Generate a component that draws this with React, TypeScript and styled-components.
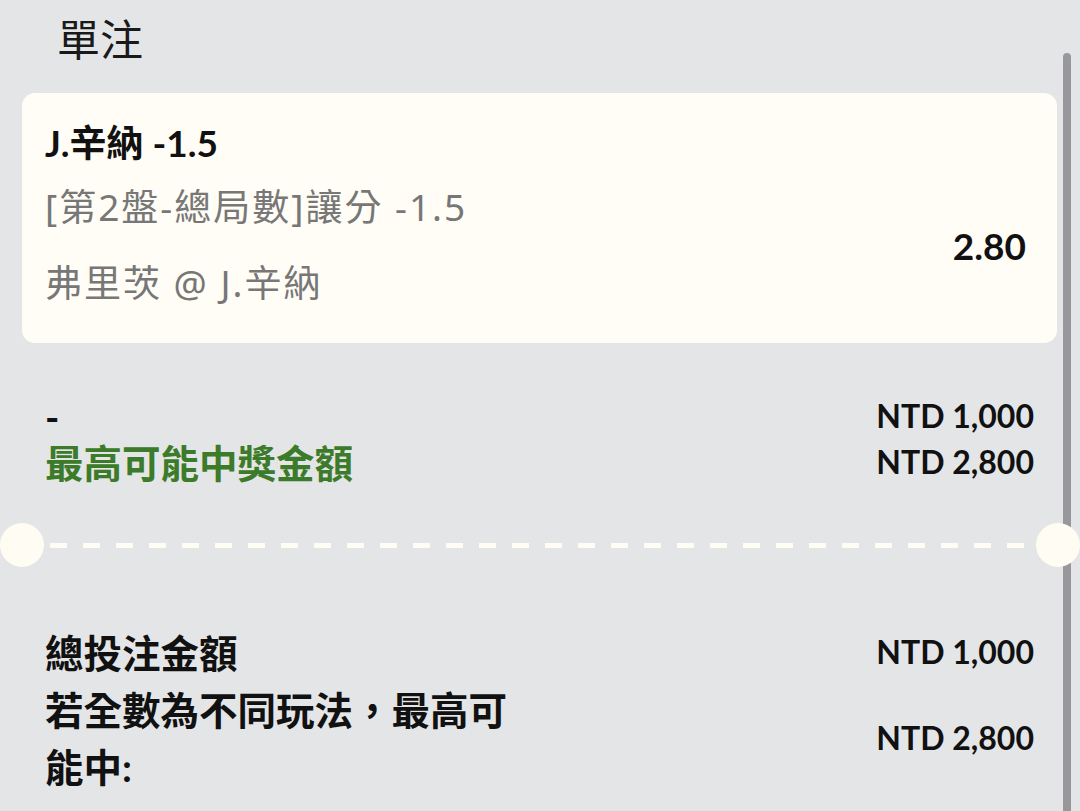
import React from "react";
import styled, { createGlobalStyle } from "styled-components";

const Global = createGlobalStyle`
  html, body {
    margin: 0;
    padding: 0;
    background: #e4e5e7;
    overflow: hidden;
  }
  * { box-sizing: border-box; }
`;

const FONT = `Lato, "Noto Sans CJK TC", "Noto Sans", sans-serif`;
const DETAIL_FONT = `"Noto Sans", "Noto Sans CJK TC", sans-serif`;

const Page = styled.div`
  position: relative;
  width: 1080px;
  height: 811px;
  overflow: hidden;
  background: #e4e5e7;
  font-family: ${FONT};
  color: #111;
`;

const Scrollbar = styled.div`
  position: absolute;
  left: 1063px;
  top: 53px;
  width: 8px;
  bottom: -10px;
  border-radius: 4px;
  background: #98989c;
  z-index: 0;
`;

const Title = styled.h1`
  margin: 0;
  padding-left: 57px;
  height: 80px;
  line-height: 80px;
  font-size: 43px;
  font-weight: 400;
  color: #1a1a1a;
`;

const Card = styled.section`
  position: relative;
  z-index: 1;
  margin: 13px 23px 0 22px;
  height: 250px;
  border-radius: 13px;
  background: #fffdf5;
  padding: 25px 31px 0 23px;
`;

const BetName = styled.div`
  font-size: 37px;
  font-weight: 700;
  line-height: 50px;
  color: #111;
`;

const CardBody = styled.div`
  display: flex;
  align-items: center;
  justify-content: space-between;
  margin-top: 1px;
`;

const Details = styled.div`
  display: flex;
  flex-direction: column;
`;

const Detail = styled.div`
  font-family: ${DETAIL_FONT};
  font-size: 37px;
  letter-spacing: 2px;
  font-weight: 400;
  line-height: 76px;
  color: #777777;
`;

const Odds = styled.div`
  font-size: 37px;
  font-weight: 700;
  color: #111;
`;

const Summary = styled.div<{ $top: number }>`
  position: relative;
  z-index: 1;
  display: grid;
  grid-template-columns: auto auto;
  justify-content: space-between;
  align-items: center;
  margin-top: ${(p) => p.$top}px;
  padding: 0 46px 0 45px;
`;

const Label = styled.div<{ $green?: boolean; $line: number }>`
  font-size: 38.5px;
  font-weight: 700;
  line-height: ${(p) => p.$line}px;
  color: ${(p) => (p.$green ? "#3b7b29" : "#111")};
  max-width: 480px;
`;

const Amount = styled.div`
  font-size: 32px;
  font-weight: 700;
  text-align: right;
  color: #111;
  white-space: nowrap;
  padding-bottom: 4px;
`;

const Divider = styled.div`
  position: relative;
  z-index: 2;
  display: flex;
  align-items: center;
  height: 44px;
  margin-top: 37px;
`;

const Notch = styled.div`
  width: 44px;
  height: 44px;
  flex: none;
  border-radius: 50%;
  background: #fffdf3;
`;

const Dashes = styled.div`
  flex: 1;
  height: 5px;
  margin: 0 6px;
  background: repeating-linear-gradient(
    to right,
    #fffdf3 0 17px,
    transparent 17px 33px
  );
`;

export default function App() {
  return (
    <Page>
      <Global />
      <Scrollbar />
      <Title>單注</Title>
      <Card>
        <BetName>J.辛納 -1.5</BetName>
        <CardBody>
          <Details>
            <Detail>[第2盤-總局數]讓分 -1.5</Detail>
            <Detail>弗里茨 @ J.辛納</Detail>
          </Details>
          <Odds>2.80</Odds>
        </CardBody>
      </Card>
      <Summary $top={51}>
        <Label $line={46}>-</Label>
        <Amount>NTD 1,000</Amount>
        <Label $line={46} $green>
          最高可能中獎金額
        </Label>
        <Amount>NTD 2,800</Amount>
      </Summary>
      <Divider>
        <Notch />
        <Dashes />
        <Notch />
      </Divider>
      <Summary $top={58}>
        <Label $line={57}>總投注金額</Label>
        <Amount>NTD 1,000</Amount>
        <Label $line={57}>若全數為不同玩法，最高可能中:</Label>
        <Amount>NTD 2,800</Amount>
      </Summary>
    </Page>
  );
}
